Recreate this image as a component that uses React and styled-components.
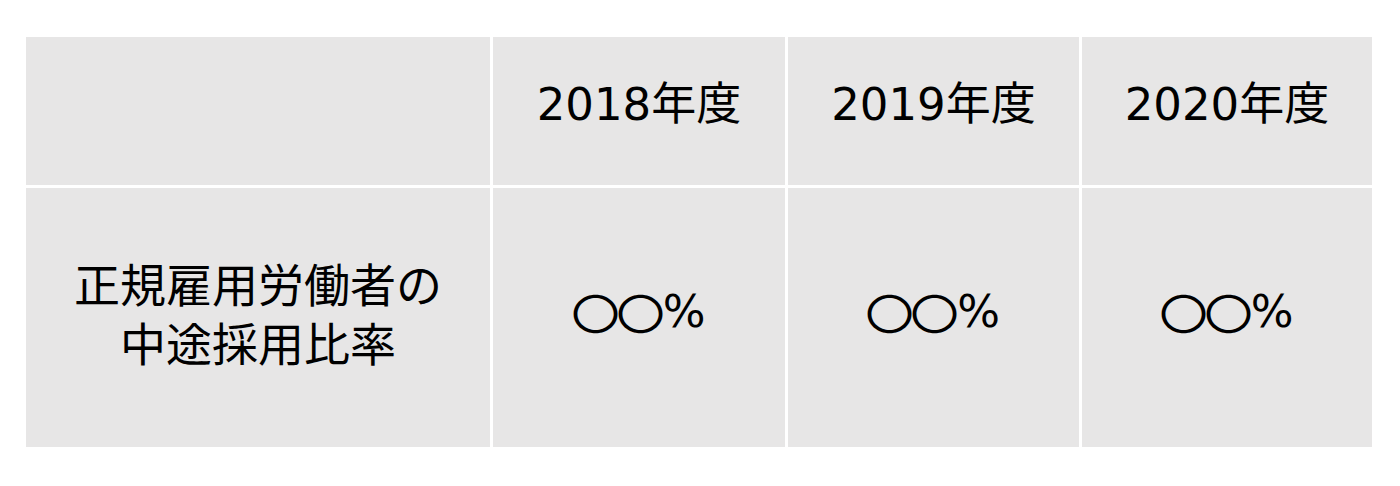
import React from "react";
import styled, { createGlobalStyle } from "styled-components";

const Global = createGlobalStyle`
  html, body { margin: 0; padding: 0; background: #ffffff; }
  body { font-family: "DejaVu Sans", "Noto Sans CJK JP", sans-serif; color: #000; }
`;

const Page = styled.div`
  padding: 37px 0 0 26px;
`;

const Table = styled.div`
  display: grid;
  grid-template-columns: 464px 292px 291px 290px;
  grid-template-rows: 148px 259px;
  gap: 3px;
  width: 1346px;
`;

const Cell = styled.div`
  background: #e7e6e6;
  display: flex;
  align-items: center;
  justify-content: center;
  text-align: center;
  font-size: 45px;
  line-height: 59px;
  padding-bottom: ${(p) => (p.$header ? 14 : 12)}px;
  box-sizing: border-box;
`;

const Label = styled.div`
  font-family: "Noto Sans CJK JP", sans-serif;
  font-size: 46px;
  line-height: 59px;
`;

const Circle = styled.span`
  display: inline-block;
  font-family: "Noto Sans CJK JP", sans-serif;
  transform: scale(1.08, 0.94);
`;

const years = ["2018", "2019", "2020"];

export default function App() {
  return (
    <>
      <Global />
      <Page>
        <Table>
          <Cell $header />
          {years.map((y) => (
            <Cell $header key={y}>
              {y}年度
            </Cell>
          ))}
          <Cell>
            <Label>
              正規雇用労働者の
              <br />
              中途採用比率
            </Label>
          </Cell>
          {years.map((y) => (
            <Cell key={y}>
              <Circle>〇</Circle>
              <Circle>〇</Circle>%
            </Cell>
          ))}
        </Table>
      </Page>
    </>
  );
}
